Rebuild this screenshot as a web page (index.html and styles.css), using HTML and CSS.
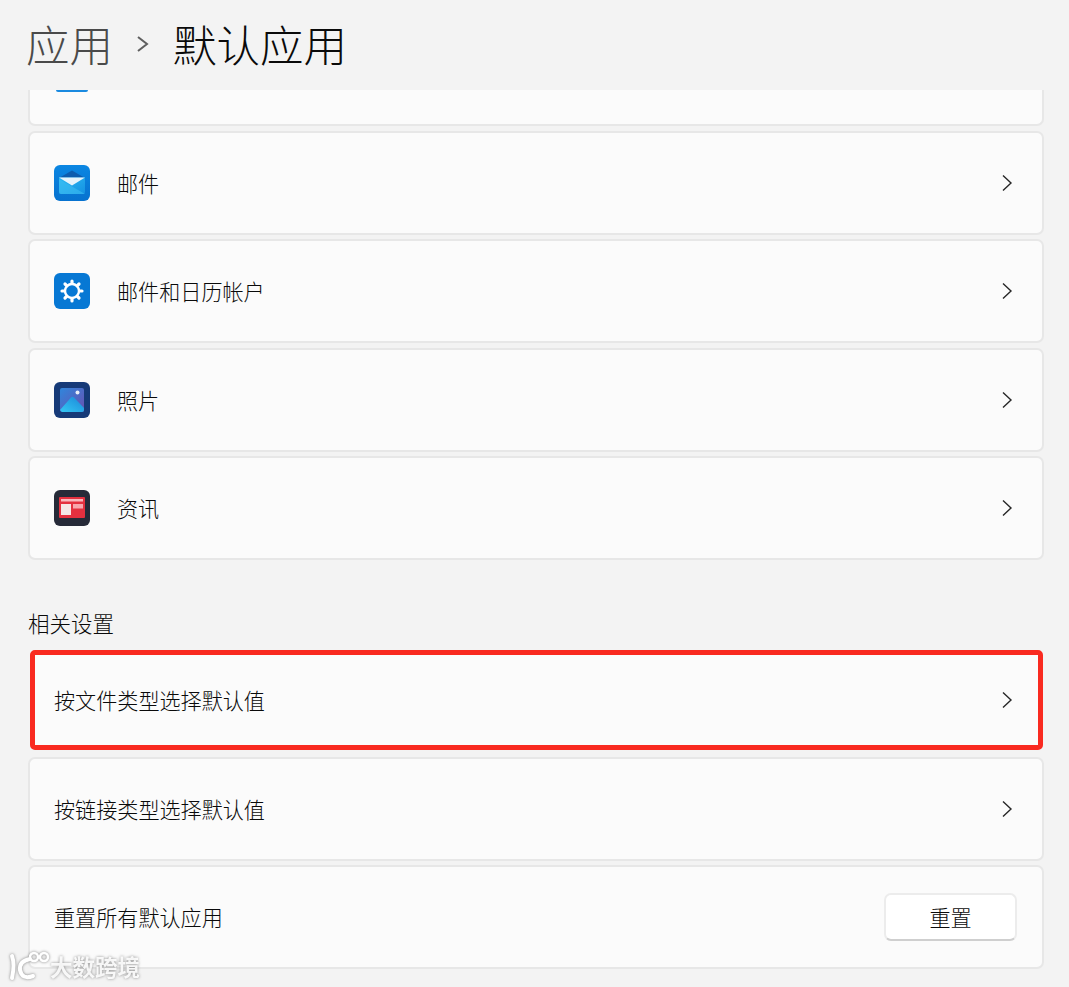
FILE: index.html
```html
<!DOCTYPE html>
<html lang="zh-CN">
<head>
  <meta charset="UTF-8">
  <title>默认应用</title>
  <link rel="stylesheet" href="styles.css">
</head>
<body>
  <header class="crumbs">
    <span class="crumb-parent">应用</span>
    <svg class="crumb-sep" width="14" height="22" viewBox="0 0 14 22"><path d="M2 4 L11 11 L2 18" fill="none" stroke="#5f5f5f" stroke-width="2"/></svg>
    <span class="crumb-current">默认应用</span>
  </header>

  <main class="content">
    <div class="card card-cut">
      <span class="app-icon icon-cut"></span>
    </div>

    <div class="card">
      <svg class="app-icon" viewBox="0 0 36 36">
        <defs>
          <linearGradient id="mailBg" x1="0" y1="0" x2="0" y2="1"><stop offset="0" stop-color="#0b86e2"/><stop offset="1" stop-color="#0772cf"/></linearGradient>
          <linearGradient id="mailBody" x1="0" y1="0" x2="1" y2="1"><stop offset="0" stop-color="#2bb8f2"/><stop offset="1" stop-color="#1592e2"/></linearGradient>
        </defs>
        <rect width="36" height="36" rx="6" fill="url(#mailBg)"/>
        <path d="M5 13 L18 5.500 L31 13 L31 17 L5 17 Z" fill="#0d5cae"/>
        <path d="M5 12.500 H31 V27 A2 2 0 0 1 29 29 H7 A2 2 0 0 1 5 27 Z" fill="url(#mailBody)"/>
        <path d="M5 12.500 H31 L18 20.500 Z" fill="#e6f3fb"/>
        <path d="M5 14 L31 29 H7 A2 2 0 0 1 5 27 Z" fill="#3fc0f2" opacity=".55"/>
      </svg>
      <span class="card-label">邮件</span>
      <svg class="chev" width="12" height="18" viewBox="0 0 12 18"><path d="M2 1.500 L10 9 L2 16.500" fill="none" stroke="#262626" stroke-width="1.400"/></svg>
    </div>

    <div class="card">
      <svg class="app-icon" viewBox="0 0 36 36">
        <rect width="36" height="36" rx="6" fill="#0778d4"/>
        <circle cx="18" cy="18" r="7" fill="none" stroke="#fff" stroke-width="2.400"/>
        <g stroke="#fff" stroke-width="3.200" stroke-linecap="round">
          <path d="M18 8 V10.500 M18 25.500 V28 M8 18 H10.500 M25.500 18 H28 M11 11 L12.700 12.700 M23.300 23.300 L25 25 M25 11 L23.300 12.700 M12.700 23.300 L11 25"/>
        </g>
      </svg>
      <span class="card-label">邮件和日历帐户</span>
      <svg class="chev" width="12" height="18" viewBox="0 0 12 18"><path d="M2 1.500 L10 9 L2 16.500" fill="none" stroke="#262626" stroke-width="1.400"/></svg>
    </div>

    <div class="card">
      <svg class="app-icon" viewBox="0 0 36 36">
        <defs>
          <linearGradient id="photoBg" x1="0" y1="0" x2="1" y2="1"><stop offset="0" stop-color="#2f86dc"/><stop offset="1" stop-color="#6a4fb0"/></linearGradient>
          <linearGradient id="photoHill" x1="0" y1="1" x2="1" y2="0"><stop offset="0" stop-color="#35c8f4"/><stop offset="1" stop-color="#1a86d8"/></linearGradient>
        </defs>
        <rect width="36" height="36" rx="6" fill="#163a78"/>
        <rect x="6" y="6" width="24" height="24" rx="2" fill="url(#photoBg)"/>
        <circle cx="23.500" cy="10.500" r="2" fill="#e8eef8"/>
        <path d="M6 28 L17 15.500 Q18.500 14 20 15.500 L30 26 V28 A2 2 0 0 1 28 30 H8 Z" fill="url(#photoHill)"/>
      </svg>
      <span class="card-label">照片</span>
      <svg class="chev" width="12" height="18" viewBox="0 0 12 18"><path d="M2 1.500 L10 9 L2 16.500" fill="none" stroke="#262626" stroke-width="1.400"/></svg>
    </div>

    <div class="card">
      <svg class="app-icon" viewBox="0 0 36 36">
        <rect width="36" height="36" rx="6" fill="#262a38"/>
        <rect x="5" y="7" width="26" height="21" rx="1" fill="#e4303f"/>
        <rect x="7" y="9" width="22" height="2.500" fill="#f8b8bd"/>
        <rect x="7" y="14" width="10" height="11" fill="#f4e6e6"/>
        <rect x="19" y="14" width="10" height="4.500" fill="#f8a6ad"/>
      </svg>
      <span class="card-label">资讯</span>
      <svg class="chev" width="12" height="18" viewBox="0 0 12 18"><path d="M2 1.500 L10 9 L2 16.500" fill="none" stroke="#262626" stroke-width="1.400"/></svg>
    </div>

    <h2 class="section-title">相关设置</h2>

    <div class="card card-marked">
      <span class="card-label card-label-plain">按文件类型选择默认值</span>
      <svg class="chev" width="12" height="18" viewBox="0 0 12 18"><path d="M2 1.500 L10 9 L2 16.500" fill="none" stroke="#262626" stroke-width="1.400"/></svg>
    </div>

    <div class="card">
      <span class="card-label card-label-plain">按链接类型选择默认值</span>
      <svg class="chev" width="12" height="18" viewBox="0 0 12 18"><path d="M2 1.500 L10 9 L2 16.500" fill="none" stroke="#262626" stroke-width="1.400"/></svg>
    </div>

    <div class="card">
      <span class="card-label card-label-plain">重置所有默认应用</span>
      <button class="btn">重置</button>
    </div>
  </main>

  <div class="watermark">
    <svg width="42" height="34" viewBox="0 0 42 34"><g fill="none" stroke="#fff" stroke-linecap="round"><path d="M4 7 Q7 15 4 29" stroke-width="4"/><path d="M22 10 Q11 12 12 21 Q14 31 25 27" stroke-width="4"/><circle cx="26" cy="8" r="4" stroke-width="2.500"/><circle cx="36" cy="8" r="4" stroke-width="2.500"/></g></svg>
    <span class="watermark-text">大数跨境</span>
  </div>
</body>
</html>
```

FILE: styles.css
```css
html, body {
  margin: 0;
  height: 987px;
  overflow: hidden;
}
body {
  position: relative;
  background: #f3f3f3;
  color: #0a0a0a;
  font-family: "Noto Sans CJK SC", "Liberation Sans", sans-serif;
}
.crumbs {
  box-sizing: border-box;
  height: 90px;
  padding: 0 0 3px 26px;
  display: flex;
  align-items: center;
  font-size: 43.500px;
  font-weight: 300;
  line-height: 1;
}
.crumb-parent {
  color: #4a4a4a;
}
.crumb-sep {
  margin: 0 23px 0 23px;
}
.content {
  padding: 0 25px 0 28px;
  display: flex;
  flex-direction: column;
  gap: 4.500px;
}
.card {
  box-sizing: border-box;
  height: 104px;
  display: flex;
  align-items: center;
  padding: 0 29px 0 24px;
  background: #fbfbfb;
  border: 2px solid #e7e7e7;
  border-radius: 7px;
}
.card-cut {
  height: 36px;
  border-top: 0;
  border-radius: 0 0 7px 7px;
  align-items: flex-start;
}
.app-icon {
  width: 36px;
  height: 36px;
  flex: none;
}
.icon-cut {
  height: 2px;
  width: 32px;
  margin-left: 2px;
  background: #1a8ae0;
  border-radius: 0 0 6px 6px;
}
.card-label {
  margin-left: 27px;
  font-size: 21.100px;
  font-weight: 300;
  flex: 1;
}
.card-label-plain {
  margin-left: 0;
}
.chev {
  flex: none;
}
.section-title {
  margin: 41px 0 6px;
  font-size: 21.500px;
  line-height: 34px;
  font-weight: 300;
}
.card-marked {
  height: 100px;
  margin: 0 1px 2px 2px;
  padding-left: 19px;
  padding-right: 25px;
  border: 5px solid #f92a20;
  border-radius: 5px;
}
.btn {
  box-sizing: border-box;
  width: 133px;
  height: 48px;
  margin-right: -4px;
  background: #fff;
  border: 2px solid #ececec;
  border-bottom-color: #cfcfcf;
  border-radius: 7px;
  font-family: inherit;
  font-size: 21.100px;
  font-weight: 300;
  color: #0a0a0a;
}
.watermark {
  position: absolute;
  left: 8px;
  top: 949px;
  display: flex;
  align-items: center;
  gap: 0;
  filter: drop-shadow(0 0 1.500px rgba(80, 80, 80, .7));
}
.watermark-text {
  font-size: 22.500px;
  font-weight: 700;
  color: rgba(255, 255, 255, .9);
}
```
